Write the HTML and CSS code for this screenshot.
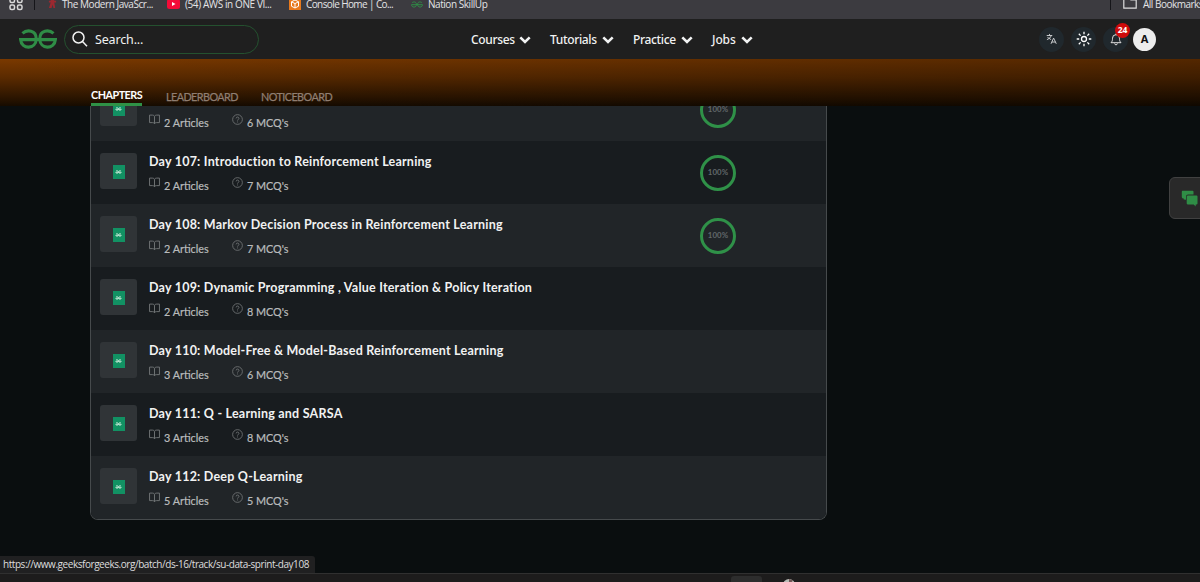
FILE: index.html
```html
<!DOCTYPE html>
<html lang="en">
<head>
<meta charset="utf-8">
<title>Nation SkillUp</title>
<link rel="stylesheet" href="styles.css">
</head>
<body>
<svg width="0" height="0" class="defs">
  <defs>
    <symbol id="logo" viewBox="0 0 38 20"><g fill="none" stroke="currentColor" stroke-width="3.100"><path d="M3.500 4.400C8 .2 17.200 1 17.200 9.800c0 11-14.800 11-15.600.8h34.800c-.8 10.200-15.600 10.200-15.600-.8C20.800 1 30 .2 34.500 4.400"/></g></symbol>
    <symbol id="mark" viewBox="0 0 8 5"><g fill="none" stroke="currentColor"><path d="M1 1.200C2.500.2 3.600 1 3.600 2.500c0 2.400-2.700 2.200-3 .2h6.800c-.3 2-3 2.200-3-.2C4.400 1 5.500.2 7 1.200"/></g></symbol>
    <symbol id="chev" viewBox="0 0 12 8"><path d="M1.300 1.400 6 6l4.700-4.600" fill="none" stroke="currentColor" stroke-width="2.600"/></symbol>
    <symbol id="book" viewBox="0 0 12 11"><path d="M6 2C5.500 1 4.500.7 3.500.7H.6v8.200h3.200C5 8.900 5.700 9.300 6 10c.3-.7 1-1.100 2.200-1.100h3.200V.7H8.500C7.500.7 6.500 1 6 2zv8" fill="none" stroke="currentColor"/></symbol>
    <symbol id="help" viewBox="0 0 12 12"><circle cx="6" cy="6" r="5.300" fill="none" stroke="currentColor" stroke-width=".9"/><path d="M4.500 4.800c0-2 3.100-1.900 3.100 0C7.600 6 6 6 6 7.200m0 1v1" fill="none" stroke="currentColor" stroke-width=".9"/></symbol>
  </defs>
</svg>
<div class="bookmarks">
  <svg class="apps" viewBox="0 0 14 14"><g fill="none" stroke="#d8d8d8" stroke-width="1.500"><rect x="1" y="1" width="4.500" height="4.500" rx="1.500"/><rect x="8.500" y="1" width="4.500" height="4.500" rx="1.500"/><rect x="1" y="8" width="4.500" height="4.500" rx="1.500"/><rect x="8.500" y="8" width="4.500" height="4.500" rx="1.500"/></g></svg>
  <i class="sep"></i>
  <svg class="fav js" viewBox="0 0 10 12"><path d="M3 0h4v3h2v2H7l1 6H6L5 7l-1 4H1l2-6H1V3h2z" fill="#9b2830"/></svg>
  <span class="bm b1">The Modern JavaScr...</span>
  <svg class="fav yt" viewBox="0 0 13 10"><rect width="13" height="10" rx="2.500" fill="#f40b38"/><path d="M5 3v4l3.500-2z" fill="#fff"/></svg>
  <span class="bm b2">(54) AWS in ONE VI...</span>
  <svg class="fav aws" viewBox="0 0 12 12"><rect width="12" height="12" fill="#e8791c"/><path d="M6 2l3.500 1.800v4.400L6 10 2.500 8.200V3.800zM2.500 3.800 6 5.600l3.500-1.800M6 5.600V10" fill="none" stroke="#fff"/></svg>
  <span class="bm b3">Console Home | Co...</span>
  <svg class="fav gfg"><use href="#logo"/></svg>
  <span class="bm b4">Nation SkillUp</span>
  <i class="sep sep2"></i>
  <svg class="folder" viewBox="0 0 14 12"><path d="M.8.800h5l2 2h5.400v8.400H.8z" fill="none" stroke="#ddd" stroke-width="1.200"/></svg>
  <span class="bm b5">All Bookmarks</span>
</div>
<header class="header">
  <svg class="logo"><use href="#logo"/></svg>
  <div class="search"><svg viewBox="0 0 16 16"><g fill="none" stroke="#f2f2f2" stroke-width="1.500"><circle cx="6.500" cy="6.500" r="5.500"/><path d="m10.500 10.500 4.500 4.800"/></g></svg><span>Search...</span></div>
  <nav class="nav">
    <span class="link n1">Courses<svg><use href="#chev"/></svg></span>
    <span class="link n2">Tutorials<svg><use href="#chev"/></svg></span>
    <span class="link n3">Practice<svg><use href="#chev"/></svg></span>
    <span class="link n4">Jobs<svg><use href="#chev"/></svg></span>
  </nav>
  <div class="tools">
    <span class="tool"><svg viewBox="0 0 12 12"><path d="M.8 2.200h6M3.800.5v1.700M5.800 2.200C5 4.500 3 6 1 6.700M1.600 4.200l4 2.500M5.500 11.200 8.300 5l2.900 6.200M6.300 9.300h4" fill="none" stroke="#d5d8da"/></svg></span>
    <span class="tool"><svg class="sun" viewBox="0 0 16 16"><g fill="none" stroke="#fff" stroke-width="1.300"><circle cx="8" cy="8" r="2.500"/><path d="M8 .7v2.500M8 12.800v2.500M.7 8h2.500M12.800 8h2.500M2.800 2.800l1.800 1.800M11.400 11.400l1.800 1.800M2.800 13.200l1.800-1.800M11.400 4.600l1.800-1.800"/></g></svg></span>
    <span class="tool"><svg class="bell" viewBox="0 0 12 13"><path d="M6 .6v1M1 9.700c1.400-1.400 1.500-2.500 1.500-4.500a3.500 3.500 0 0 1 7 0c0 2 .1 3.100 1.500 4.500zM4.600 10.500c.2 1.800 2.600 1.800 2.800 0" fill="none" stroke="#e0e0e0"/></svg><b class="badge">24</b></span>
    <span class="avatar">A</span>
  </div>
</header>
<div class="banner">
  <span class="tab t1">CHAPTERS</span><span class="tab t2">LEADERBOARD</span><span class="tab t3">NOTICEBOARD</span>
</div>
<main class="page">
  <div class="list" id="list"></div>
  <div class="chat"><svg viewBox="0 0 17 17"><path d="M1.500.8h10q1 0 1 1v2.700H7q-2 0-2 2v3.200l-2.300-.2v-1q-1.900 0-1.900-1.500V2q0-1.200.7-1.200z" fill="#2f8d46"/><path d="M7 5.500h8.500q1 0 1 1v7q0 1-1 1h-.8v2l-2-2H7q-1.300 0-1.300-1v-7q0-1 1.300-1z" fill="#2f8d46"/></svg></div>
</main>
<div class="status">https://www.geeksforgeeks.org/batch/ds-16/track/su-data-sprint-day108</div>
<footer class="taskbar"><i class="task"></i><svg viewBox="0 0 12 12"><circle cx="6" cy="6" r="6" fill="#b9bcb7"/><path d="M6 0v6l4-4.500z" fill="#705454"/></svg></footer>
<script src="script.js"></script>
</body>
</html>
```
FILE: styles.css
```css
* { box-sizing: border-box; }
body { margin: 0; width: 1200px; height: 582px; overflow: hidden; display: flex; flex-direction: column; position: relative; background: #0a0e0f; color: #f1f2f2; font-family: Lato, sans-serif; }
svg { display: block; flex: none; overflow: visible; }
span { white-space: nowrap; }
.defs { position: absolute; }
.bookmarks { height: 19px; flex: none; background: #3c3b40; display: flex; align-items: flex-start; overflow: hidden; font: 10px/14px "Open Sans", sans-serif; letter-spacing: -.45px; color: #e4e4e6; }
.bm { margin-top: -3px; }
.apps { width: 14px; height: 14px; margin: -3px 0 0 9px; }
.sep { width: 1px; height: 10px; background: #151519; margin-left: 11px; }
.sep2 { margin-left: auto; }
.js { width: 9px; height: 11px; margin: -2px 5px 0 13px; }
.b1 { width: 92px; }
.yt { width: 13px; height: 10px; margin: -1px 5px 0 13px; }
.b2 { width: 89px; letter-spacing: -.4px; }
.aws { width: 12px; height: 12px; margin: -2px 5px 0 15px; }
.b3 { width: 88px; letter-spacing: -.6px; }
.gfg { width: 12px; height: 7px; margin: 1px 5px 0 17px; color: #2f8d46; }
.folder { width: 14px; height: 12px; margin: -3px 6px 0 12px; }
.b5 { width: 57px; letter-spacing: -.5px; }
.header { height: 40px; flex: none; background: #1f1f1f; display: flex; align-items: center; padding-left: 19px; font-family: "Noto Sans", sans-serif; }
.logo { width: 38px; height: 20px; color: #2f8d46; }
.search { width: 195px; height: 29px; margin-left: 7px; border: 1px solid #24512f; border-radius: 15px; display: flex; align-items: center; gap: 7px; padding-left: 7px; font-size: 12.500px; letter-spacing: -.15px; }
.search svg { width: 16px; height: 16px; }
.nav { display: flex; margin-left: 212px; width: 568px; font-size: 12px; font-weight: 500; letter-spacing: -.35px; }
.link { display: flex; align-items: center; justify-content: space-between; margin-right: 19px; }
.link svg { width: 12px; height: 8px; margin-top: 2px; }
.n1 { width: 60px; } .n2 { width: 64px; } .n3 { width: 60px; } .n4 { width: 41px; letter-spacing: -.1px; }
.tools { display: flex; align-items: center; }
.tool { width: 25px; height: 25px; border-radius: 50%; background: #20282d; display: flex; align-items: center; justify-content: center; margin-right: 7px; position: relative; }
.tool svg { width: 11px; height: 12px; }
.tool .sun { width: 16px; height: 16px; }
.tool .bell { width: 12px; height: 13px; }
.badge { position: absolute; left: 12px; top: -4px; width: 15px; height: 15px; border-radius: 50%; background: #cf0b0b; color: #fff; font-size: 8.500px; line-height: 14px; text-align: center; }
.tool:nth-child(3) { margin-right: 5px; }
.avatar { width: 23px; height: 23px; border-radius: 50%; background: #ededed; color: #111; font-size: 11px; font-weight: 700; line-height: 22px; text-align: center; }
.banner { height: 47px; flex: none; background: linear-gradient(90deg, #00000000, #00000050), linear-gradient(#7a3900, #5c2b00 38%, #2c1500 82%, #160b00); display: flex; align-items: flex-end; padding-left: 91px; font-size: 10.800px; color: #8f7e72; }
.tab { line-height: 18px; letter-spacing: -.55px; -webkit-text-stroke: .25px; }
.t1 { width: 51px; height: 20px; border-bottom: 3px solid #2f9146; color: #fff; font-weight: 700; line-height: 18px; letter-spacing: -.5px; -webkit-text-stroke: 0; }
.t2 { width: 71px; margin-left: 24px; }
.t3 { margin-left: 24px; }
.page { flex: 1; min-height: 0; position: relative; padding-left: 90px; }
.list { width: 737px; height: 413.500px; overflow: hidden; border: 1px solid #464a4c; border-top: 0; border-radius: 0 0 8px 8px; display: flex; flex-direction: column; justify-content: flex-end; }
.row { height: 63px; flex: none; display: flex; background: #181c1f; padding: 13px 90px 0 9px; }
.row.alt { background: #212528; }
.thumb { width: 37px; height: 36px; margin-top: -1px; border-radius: 3px; background: #303437; display: flex; align-items: center; justify-content: center; margin-right: 12px; }
.thumb i { width: 12px; height: 14px; background: #129163; display: flex; align-items: center; justify-content: center; margin-top: 2px; }
.thumb svg { width: 7px; height: 4px; color: #d3efe0; }
.text { flex: 1; }
.title { display: block; font-size: 12.500px; line-height: 16px; font-weight: 700; letter-spacing: .22px; }
.meta { display: flex; color: #b9bbbc; font-size: 10.800px; line-height: 15px; margin-top: 7px; -webkit-text-stroke: .2px; }
.meta svg { color: #74787a; }
.book { width: 11px; height: 11px; margin: 0 4px 0 0; }
.help { width: 11px; height: 11px; margin: 0 4px 0 0; }
.articles { width: 68px; padding-top: 1px; }
.mcq { padding-top: 1px; }
.ring { width: 36px; height: 36px; margin-top: 1px; border: 3px solid #2f9148; border-radius: 50%; color: #62686b; font-size: 7.800px; font-weight: 700; line-height: 28px; letter-spacing: .15px; text-align: center; }
.chat { position: absolute; right: -6px; top: 71px; width: 37px; height: 42px; border: 1px solid #414141; border-radius: 6px; background: #292929; padding: 12px 0 0 11px; }
.chat svg { width: 17px; height: 17px; }
.status { position: absolute; left: 0; bottom: 9px; width: 315px; height: 17px; padding-left: 3px; background: #202021; color: #dededf; font: 10px/17px "Open Sans", sans-serif; letter-spacing: -.45px; white-space: nowrap; border-radius: 0 3px 0 0; }
.taskbar { height: 9px; flex: none; background: #1d1c1c; border-top: 1px solid #303030; display: flex; padding: 2px 0 0 731px; overflow: hidden; }
.task { width: 31px; height: 9px; border-radius: 3px 3px 0 0; background: #2d2d2d; }
.taskbar svg { width: 12px; height: 12px; margin: 3px 0 0 21px; }
```
FILE: script.js
```js
const chapters = [
  ["Day 106: Deep Reinforcement Learning", 2, 6, true],
  ["Day 107: Introduction to Reinforcement Learning", 2, 7, true],
  ["Day 108: Markov Decision Process in Reinforcement Learning", 2, 7, true],
  ["Day 109: Dynamic Programming , Value Iteration & Policy Iteration", 2, 8],
  ["Day 110: Model-Free & Model-Based Reinforcement Learning", 3, 6],
  ["Day 111: Q - Learning and SARSA", 3, 8],
  ["Day 112: Deep Q-Learning", 5, 5]
];
document.getElementById("list").innerHTML = chapters.map(([title, articles, mcqs, done], i) => `
  <div class="row${i % 2 ? "" : " alt"}">
    <div class="thumb"><i><svg><use href="#mark"/></svg></i></div>
    <div class="text"><span class="title">${i ? title.replace("&", "&amp;") : "&nbsp;"}</span>
      <div class="meta"><svg class="book"><use href="#book"/></svg><span class="articles">${articles} Articles</span><svg class="help"><use href="#help"/></svg><span class="mcq">${mcqs} MCQ's</span></div></div>
    ${done ? '<div class="ring">100%</div>' : ""}
  </div>`).join("");
```
